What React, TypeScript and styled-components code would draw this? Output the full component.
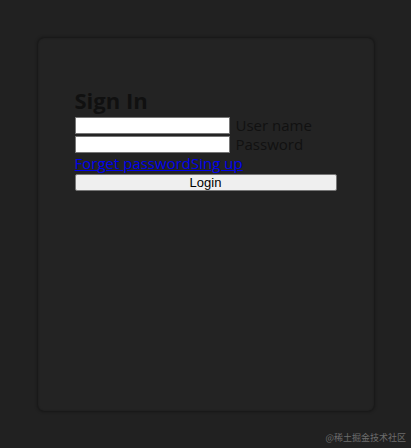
import styled, { createGlobalStyle } from 'styled-components';

const GlobalStyle = createGlobalStyle`
   html, body {
      margin: 0;
      padding: 0;
      background: #212121;
   }

   body {
      font-family: 'Open Sans', 'Noto Sans CJK SC', sans-serif;
   }
`;

const App = () => {
   return (
      <>
         <GlobalStyle />
         <Page>
            <Card>
               <Title>Sign In</Title>
               <Field>
                  <Input type='text' />
                  <Label>User name</Label>
               </Field>
               <Field>
                  <Input type='password' />
                  <Label>Password</Label>
               </Field>
               <Links>
                  <a href='#forget'>Forget password</a>
                  <a href='#signup'>Sing up</a>
               </Links>
               <Button type='button'>Login</Button>
            </Card>
            <Watermark>@稀土掘金技术社区</Watermark>
         </Page>
      </>
   );
};

const Page = styled.div`
   position: relative;
   display: flex;
   align-items: center;
   justify-content: center;
   width: 411px;
   height: 448px;
`;

const Card = styled.div`
   box-sizing: border-box;
   display: flex;
   flex-direction: column;
   align-items: flex-start;
   width: 336px;
   height: 373px;
   padding: 47px 37px;
   background: #232323;
   border-radius: 6px;
   box-shadow: 0 0 3px 1px rgba(0, 0, 0, 0.35), inset 0 0 2px rgba(0, 0, 0, 0.3);
`;

const Title = styled.h2`
   margin: 0;
   font-size: 22px;
   font-weight: 700;
   line-height: 31px;
   color: #101010;
`;

const Field = styled.div`
   display: flex;
   align-items: center;
   gap: 6px;
   height: 19px;
`;

const Input = styled.input`
   box-sizing: border-box;
   width: 155px;
   height: 17px;
   margin: 0;
   padding: 0 2px;
   border: 1px solid #767676;
   background: #fff;
`;

const Label = styled.span`
   font-size: 15px;
   line-height: 18px;
   color: #111;
`;

const Links = styled.div`
   display: flex;
   font-size: 15px;
   line-height: 19px;

   a {
      color: #0000ee;
      text-decoration: underline;
      text-decoration-thickness: 1px;
      text-underline-offset: 1px;
   }
`;

const Button = styled.button`
   box-sizing: border-box;
   width: 262px;
   height: 17px;
   margin-top: 1px;
   padding: 0;
   border: 1px solid #767676;
   border-radius: 2px;
   background: #efefef;
   font-family: 'Liberation Sans', Arial, sans-serif;
   font-size: 13px;
   line-height: 15px;
   color: #000;
`;

const Watermark = styled.span`
   position: absolute;
   right: 5px;
   bottom: 4px;
   font-family: 'Noto Sans CJK SC', sans-serif;
   font-size: 9px;
   color: #6d6d6d;
`;

export default App;
